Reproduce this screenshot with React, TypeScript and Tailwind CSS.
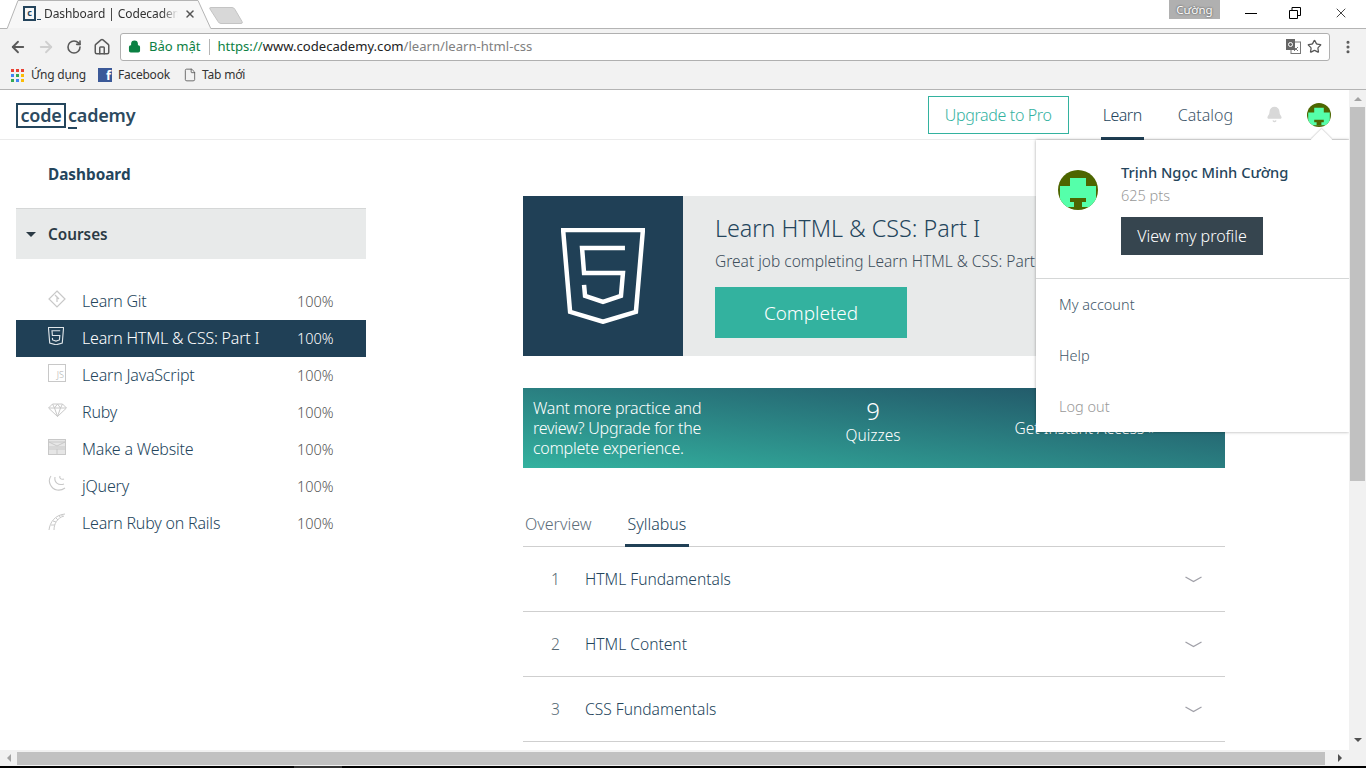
import React from "react";
import { ArrowLeft, ArrowRight, RotateCw, Home, Lock, Star, MoreVertical, X, File, Bell } from "lucide-react";

const font = { fontFamily: '"Noto Sans", "Open Sans", sans-serif' };

function Avatar({ size }: { size: number }) {
  return (
    <svg width={size} height={size} viewBox="0 0 40 40" className="rounded-full shrink-0">
      <rect width="40" height="40" fill="#4d6600" />
      <path d="M12 8h16v8h10v21H2V16h10z" fill="#55ffaa" />
      <path d="M12 28h16v4h-4v5h-8v-5h-4z" fill="#4d6600" />
    </svg>
  );
}

function Html5Icon({ size, stroke }: { size: number; stroke: number }) {
  return (
    <svg width={size} height={size * 1.14} viewBox="0 0 84 96" fill="none" stroke="currentColor" strokeWidth={stroke}>
      <path d="M2 2h80l-7 82-33 10-33-10z" />
      <path d="M64 20H21l2 25h39l-2 23-18 6-18-6-1-11" />
    </svg>
  );
}

const GitIcon = () => (
  <svg width="18" height="18" viewBox="0 0 18 18" fill="none" stroke="#c8c8c8" strokeWidth="1.2">
    <path d="M9 1l8 8-8 8-8-8z" />
    <path d="M7 5l4 4M9 7v5" />
  </svg>
);
const JsIcon = () => (
  <div className="w-[18px] h-[18px] border border-[#c8c8c8] flex items-end justify-end pr-[1px] pb-[1px] text-[9px] leading-[11px] text-[#b0b0b0]">JS</div>
);
const RubyIcon = () => (
  <svg width="19" height="14" viewBox="0 0 19 14" fill="none" stroke="#c8c8c8" strokeWidth="1">
    <path d="M4.5 1h10l4 4-9 8.500-9-8.500zM1 5h17M6.500 5l3 8.500 3-8.500M4.500 1l2 4 3-4 3 4 2-4" />
  </svg>
);
const WebIcon = () => (
  <svg width="18" height="16" viewBox="0 0 18 16" fill="none" stroke="#c8c8c8" strokeWidth="1">
    <rect x="0.5" y="0.500" width="17" height="15" fill="#e6e6e6" />
    <path d="M0 3h18M1 3l8 4 8-4M0 8h18M9 10v6M0 10h18" />
  </svg>
);
const JqueryIcon = () => (
  <svg width="18" height="18" viewBox="0 0 18 18" fill="none" stroke="#c8c8c8" strokeWidth="1.1">
    <path d="M3 1C-1 6 3 14 9 15c3 .5 6-.5 8-2" />
    <path d="M7 2c-1 5 3 9 9 7" />
    <path d="M12 1c-1 2 1 4 4 3" />
  </svg>
);
const RailsIcon = () => (
  <svg width="18" height="19" viewBox="0 0 18 19" fill="none" stroke="#c8c8c8" strokeWidth="1">
    <path d="M1 18C2 10 7 3 17 2M6 18C6 12 9 6 16 4M3 13h4M5 9l3 1M8 6l2 2M11 3l1 2M14 2v2" />
  </svg>
);

const courses = [
  { name: "Learn Git", icon: <GitIcon /> },
  { name: "Learn HTML & CSS: Part I", icon: <span className="text-[#dfe5e9]"><Html5Icon size={16} stroke={6} /></span>, active: true },
  { name: "Learn JavaScript", icon: <JsIcon /> },
  { name: "Ruby", icon: <RubyIcon /> },
  { name: "Make a Website", icon: <WebIcon /> },
  { name: "jQuery", icon: <JqueryIcon /> },
  { name: "Learn Ruby on Rails", icon: <RailsIcon /> },
];

function BrowserChrome() {
  return (
    <div className="shrink-0 bg-[#f2f2f2] border-b border-[#b4b4b4]">
      <div className="h-[29px] bg-white border-b border-[#b4b4b4] flex items-end relative">
        <svg width="212" height="29" viewBox="0 0 212 29" className="absolute left-0 top-0">
          <path d="M7 29L18 .5H198L211 29z" fill="#f7f7f7" stroke="#b4b4b4" />
          <path d="M7.500 29H210.500" stroke="#f2f2f2" strokeWidth="2" />
        </svg>
        <div className="relative ml-[23px] w-[176px] h-[29px] flex items-center text-[12px] text-[#333]">
          <span className="w-[13px] h-[15px] border-2 border-[#24445c] text-[9px] leading-[10px] font-bold text-center text-[#24445c] shrink-0">c</span>
          <span className="w-[4px] h-[1px] bg-[#24445c] mt-[11px] ml-[1px] shrink-0" />
          <span className="ml-[3px] w-[134px] shrink-0 whitespace-nowrap tracking-[-0.1px] [mask-image:linear-gradient(to_right,#000_88%,transparent)]">Dashboard | Codecadem</span>
          <X size={12} strokeWidth={3} className="ml-[6px] text-[#555] shrink-0" />
        </div>
        <svg width="36" height="19" viewBox="0 0 36 19" className="relative ml-[10px] mb-[3px]">
          <path d="M2 1.500h21q2 0 3 2l7 12q1 2-1 2H12q-2 0-3-2L1 3q-1-1.500 1-1.500z" fill="#d8d8d8" stroke="#c4c4c4" />
        </svg>
        <div className="absolute right-[146px] top-0 w-[51px] h-[19px] bg-[#b0b0b0] text-white text-[11.5px] leading-[19px] text-center [text-shadow:0_0_2px_#333]">Cường</div>
        <div className="absolute right-[109px] top-[13px] w-[12px] h-[1px] bg-black" />
        <svg width="12" height="12" viewBox="0 0 12 12" className="absolute right-[65px] top-[7px]" fill="none" stroke="#000"><path d="M.5 3.500h8v8h-8zM3 3.500V.5h8.500v8H8.500" /></svg>
        <X size={16} strokeWidth={1.1} className="absolute right-[17px] top-[5px] text-black" />
      </div>
      <div className="h-[35px] flex items-center">
        <ArrowLeft size={18} strokeWidth={2.4} className="ml-[9px] text-[#5a5a5a]" />
        <ArrowRight size={18} strokeWidth={2.4} className="ml-[10px] text-[#cfcfcf]" />
        <RotateCw size={16} strokeWidth={2.4} className="ml-[11px] text-[#5a5a5a]" />
        <Home size={18} strokeWidth={2} className="ml-[11px] text-[#5a5a5a]" />
        <div className="ml-[9px] w-[1210px] h-[28px] bg-white border border-[#b0b0b0] rounded-[3px] flex items-center text-[13.1px] relative">
          <Lock size={13} strokeWidth={2.5} fill="#0b8043" className="ml-[7px] text-[#0b8043]" />
          <span className="ml-[8px] text-[#0b8043]">Bảo mật</span>
          <span className="mx-[8px] w-[1px] h-[16px] bg-[#b5b5b5]" />
          <span className="text-[#0b8043]">https://</span>
          <span className="text-[#222]">www.codecademy.com</span>
          <span className="text-[#808080]">/learn/learn-html-css</span>
          <svg width="15" height="15" viewBox="0 0 15 15" className="absolute right-[28px] top-[5px]">
            <rect x="5" y="3" width="9.500" height="11.500" fill="#fff" stroke="#777" />
            <rect x="0" y="0" width="9" height="11" fill="#666" />
            <circle cx="4.500" cy="5.500" r="2" fill="none" stroke="#fff" />
            <path d="M8 8l4 4M12 8l-4 4" stroke="#777" />
          </svg>
          <Star size={15} strokeWidth={2} className="absolute right-[7px] top-[5px] text-[#555]" />
        </div>
        <MoreVertical size={16} strokeWidth={2.6} className="ml-[10px] text-[#5a5a5a]" />
      </div>
      <div className="h-[25px] pb-[3px] flex items-center text-[12px] text-[#333]">
        <svg width="13" height="13" viewBox="0 0 13 13" className="ml-[11px] shrink-0">
          {[0, 5, 10].map((y, r) => [0, 5, 10].map((x, c) => (
            <rect key={x + "-" + y} x={x} y={y} width="3" height="3" fill={[["#ea4335", "#ea4335", "#ea4335"], ["#4285f4", "#34a853", "#fbbc05"], ["#34a853", "#4285f4", "#fbbc05"]][r][c]} />
          )))}
        </svg>
        <span className="ml-[7px] w-[60px] whitespace-nowrap tracking-[-0.25px]">Ứng dụng</span>
        <span className="ml-[7px] w-[14px] h-[14px] bg-[#3b5998] text-white text-[13px] font-bold leading-[15px] text-right pr-[1px]">f</span>
        <span className="ml-[6px] w-[58px] whitespace-nowrap tracking-[-0.25px]">Facebook</span>
        <File size={14} strokeWidth={1.4} className="ml-[7px] text-[#555]" />
        <span className="ml-[5px] whitespace-nowrap tracking-[-0.2px]">Tab mới</span>
      </div>
    </div>
  );
}

function Header() {
  return (
    <div className="h-[50px] border-b border-[#ebebeb] flex items-center pl-[16px] shrink-0">
      <div className="flex items-start text-[18px] font-semibold text-[#2c4a60] leading-none mt-[1px]">
        <span className="border-2 border-[#24455c] w-[50px] h-[25px] flex items-center justify-center tracking-[-0.2px]">code</span>
        <span className="relative ml-[2px] h-[25px] flex items-center tracking-[-0.2px]">
          cademy
          <span className="absolute left-0 bottom-[-1px] w-[9px] h-[2px] bg-[#24455c]" />
        </span>
      </div>
      <div className="ml-auto flex items-center text-[16px] font-light">
        <div className="w-[141px] h-[38px] border border-[#33b29f] text-[#33b29f] flex items-center justify-center tracking-[-0.35px]">Upgrade to Pro</div>
        <div className="relative ml-[32px] w-[43px] justify-center text-[#24455c] h-[49px] flex items-center tracking-[-0.5px]">
          Learn
          <div className="absolute left-0 right-0 bottom-[-1px] h-[3px] bg-[#204056]" />
        </div>
        <div className="ml-[34px] text-[#42586a]">Catalog</div>
        <Bell size={17} fill="#d8d8d8" className="ml-[33px] text-[#d8d8d8]" />
        <div className="ml-[24px] mr-[18px]"><Avatar size={24} /></div>
      </div>
    </div>
  );
}

function Sidebar() {
  return (
    <div className="ml-[16px] w-[350px] shrink-0">
      <div className="h-[68px] pl-[32px] flex items-center text-[15.3px] font-bold text-[#24455c]">Dashboard</div>
      <div className="h-[51px] bg-[#e8eaea] border-t border-[#d5d7d7] flex items-center text-[15.3px] font-semibold text-[#2b3a45]">
        <span className="ml-[10px] w-0 h-0 border-x-[5px] border-x-transparent border-t-[5px] border-t-[#2b3a45]" />
        <span className="ml-[12px]">Courses</span>
      </div>
      <div className="mt-[24px]">
        {courses.map((c) => (
          <div key={c.name} className={"h-[37px] flex items-center text-[16px] font-light " + (c.active ? "bg-[#204056] text-white" : "text-[#24455c]")}>
            <div className="ml-[32px] w-[34px] -mt-[5px] flex">{c.icon}</div>
            <span className="w-[216px] whitespace-nowrap tracking-[-0.2px] pb-[2px]">{c.name}</span>
            <span className={"text-[14.5px] -ml-[1px] " + (c.active ? "text-white" : "text-[#555]")}>100%</span>
          </div>
        ))}
      </div>
    </div>
  );
}

function Main() {
  return (
    <div className="ml-[157px] w-[702px] shrink-0 pt-[56px]">
      <div className="h-[160px] bg-[#e8eaea] flex">
        <div className="w-[160px] h-[160px] bg-[#204056] flex items-center justify-center text-white shrink-0">
          <Html5Icon size={84} stroke={4.5} />
        </div>
        <div className="ml-[32px]">
          <div className="mt-[16px] text-[23.3px] leading-[33px] font-light text-[#24455c] whitespace-nowrap">Learn HTML &amp; CSS: Part I</div>
          <div className="mt-[5px] text-[15.500px] leading-[22px] font-light text-[#3e4f5c] whitespace-nowrap">Great job completing Learn HTML &amp; CSS: Part I.</div>
          <div className="mt-[15px] w-[192px] h-[51px] pt-[1px] bg-[#33b29f] text-white text-[18.9px] font-light flex items-center justify-center">Completed</div>
        </div>
      </div>
      <div className="mt-[32px] h-[80px] bg-gradient-to-tr from-[#33b29f] to-[#204f63] flex text-white">
        <div className="ml-[10px] w-[200px] text-[16px] leading-[20px] font-light pt-[10px] tracking-[-0.25px]">Want more practice and review? Upgrade for the complete experience.</div>
        <div className="ml-[100px] w-[80px] text-center pt-[9px]">
          <div className="text-[24px] leading-[28px] font-light">9</div>
          <div className="text-[15.500px] leading-[20px] font-light">Quizzes</div>
        </div>
        <div className="ml-[72px] w-[200px] text-center pt-[30px] text-[15.500px] leading-[20px] font-light">Get Instant Access »</div>
      </div>
      <div className="mt-[36px] h-[43px] border-b border-[#cfcfcf] flex items-end text-[16px] font-light">
        <div className="ml-[2px] h-[42px] pb-[2px] flex items-center text-[#5d6d79]">Overview</div>
        <div className="relative ml-[36px] h-[42px] pb-[2px] flex items-center text-[#24455c]">
          Syllabus
          <div className="absolute left-[-2px] right-[-3px] bottom-[-1px] h-[3px] bg-[#204056]" />
        </div>
      </div>
      {["HTML Fundamentals", "HTML Content", "CSS Fundamentals"].map((t, i) => (
        <div key={t} className="h-[65px] pt-[2px] border-b border-[#cfcfcf] flex items-center text-[15.6px] font-light text-[#24455c]">
          <span className="ml-[28px] w-[34px] text-[#566873]">{i + 1}</span>
          <span>{t}</span>
          <svg width="17" height="7" viewBox="0 0 17 7" fill="none" stroke="#a0a0a8" strokeWidth="1.3" className="ml-auto mr-[23px] -mt-[2px]">
            <path d="M.5 1l8 4.500 8-4.500" />
          </svg>
        </div>
      ))}
    </div>
  );
}

function Dropdown() {
  return (
    <div className="absolute left-[1036px] top-[50px] w-[313px] h-[292px] bg-white shadow-[0_0_3px_rgba(0,0,0,0.35)]">
      <div className="absolute right-[20px] top-[-8px] w-[15px] h-[15px] bg-white rotate-45 shadow-[-1px_-1px_1px_rgba(0,0,0,0.12)]" />
      <div className="relative h-[139px] border-b border-[#d5d7d7] flex">
        <div className="ml-[22px] mt-[30px]"><Avatar size={40} /></div>
        <div className="ml-[23px] mt-[21px]">
          <div className="text-[14.7px] leading-[22px] font-medium text-[#24455c] whitespace-nowrap">Trịnh Ngọc Minh Cường</div>
          <div className="text-[14.500px] leading-[24px] font-light text-[#999]">625 pts</div>
          <div className="mt-[10px] w-[142px] h-[38px] bg-[#36454f] text-white text-[16px] font-light flex items-center justify-center">View my profile</div>
        </div>
      </div>
      <div className="pl-[23px] text-[14.500px] font-light text-[#42586a]">
        <div className="h-[51px] flex items-center">My account</div>
        <div className="h-[51px] flex items-center">Help</div>
        <div className="h-[51px] flex items-center text-[#999]">Log out</div>
      </div>
    </div>
  );
}

function VScroll() {
  return (
    <div className="w-[17px] shrink-0 bg-[#f1f1f1] flex flex-col items-center">
      <div className="h-[17px] flex items-center justify-center"><span className="w-0 h-0 border-x-[4px] border-x-transparent border-b-[4px] border-b-[#a3a3a3]" /></div>
      <div className="w-[15px] h-[374px] bg-[#c1c1c1]" />
      <div className="mt-auto h-[17px] pb-[4px] flex items-center justify-center"><span className="w-0 h-0 border-x-[4px] border-x-transparent border-t-[4px] border-t-[#505050]" /></div>
    </div>
  );
}

function HScroll() {
  return (
    <div className="h-[16px] shrink-0 bg-[#f1f1f1] flex items-center">
      <div className="w-[17px] flex justify-center"><span className="w-0 h-0 border-y-[4px] border-y-transparent border-r-[4px] border-r-[#a3a3a3]" /></div>
      <div className="w-[1308px] h-[13px] bg-[#c1c1c1]" />
      <div className="ml-[13px] w-[11px] flex"><span className="w-0 h-0 border-y-[4px] border-y-transparent border-l-[4px] border-l-[#505050]" /></div>
    </div>
  );
}

export default function App() {
  return (
    <div className="w-[1366px] h-[768px] overflow-hidden flex flex-col bg-black" style={font}>
      <BrowserChrome />
      <div className="flex-1 min-h-0 flex bg-white">
        <div className="relative flex-1 min-w-0 flex flex-col overflow-hidden">
          <Header />
          <div className="flex flex-1 min-h-0 overflow-hidden">
            <Sidebar />
            <Main />
          </div>
          <Dropdown />
        </div>
        <VScroll />
      </div>
      <HScroll />
      <div className="h-[2px] shrink-0 bg-black">
        <div className="ml-[294px] w-[48px] h-[2px] bg-[#333]" />
      </div>
    </div>
  );
}
